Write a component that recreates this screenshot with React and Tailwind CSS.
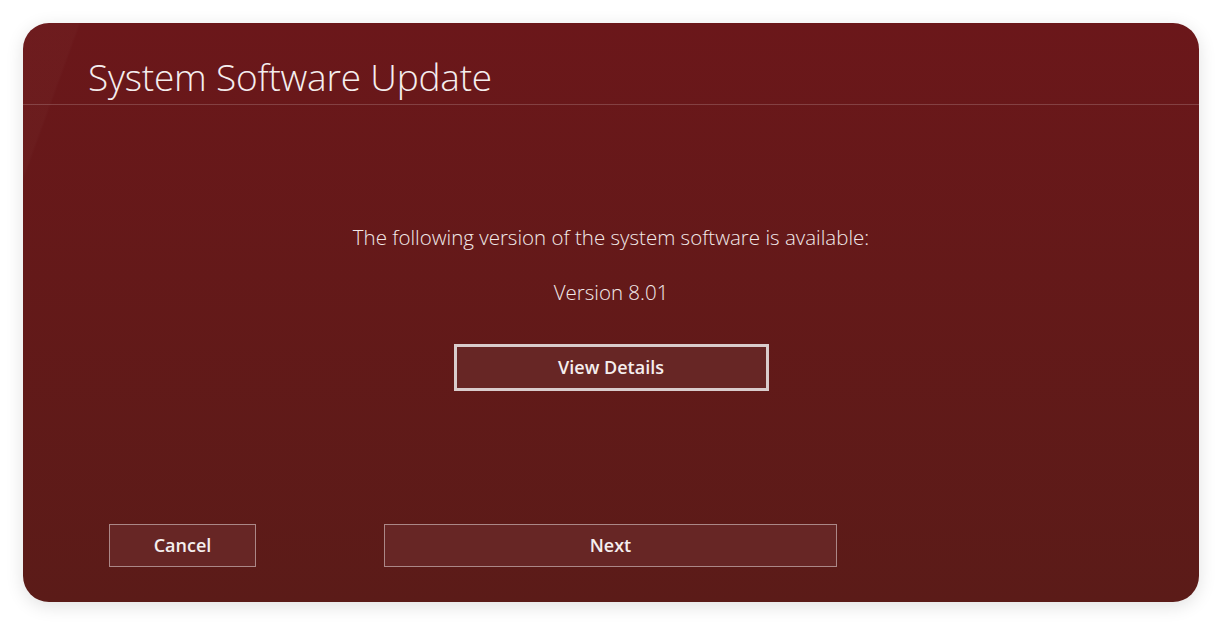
export default function App() {
  return (
    <div className="w-[1222px] h-[626px] bg-white flex items-start justify-start pt-[23px] pl-[23px]" style={{ fontFamily: '"Open Sans", "Noto Sans", sans-serif' }}>
      <div className="relative w-[1176px] h-[579px] rounded-[26px] overflow-hidden bg-gradient-to-b from-[#6b171a] to-[#5b1b18] shadow-[0_4px_18px_rgba(0,0,0,0.12)] flex flex-col">
        <div className="absolute inset-0 pointer-events-none bg-[linear-gradient(110deg,rgba(255,255,255,0.018)_0%,rgba(255,255,255,0.018)_4%,transparent_4.2%)]" />
        <div className="h-[82px] border-b border-[rgba(255,255,255,0.18)] pl-[65px] flex items-end pb-[4px]">
          <h1 className="text-[37px] font-light text-[#f5eeee] leading-none tracking-[-0.2px] pb-[5px]">System Software Update</h1>
        </div>
        <div className="flex flex-col items-center pt-[122px]">
          <p className="text-[20.5px] font-light text-[#f2e9e9] leading-none">The following version of the system software is available:</p>
          <p className="text-[20.5px] font-light text-[#f2e9e9] leading-none mt-[34px]">Version 8.01</p>
          <button className="mt-[42px] w-[315px] h-[47px] border-[3px] border-[#d9cccc] bg-[#672625] text-[#f5eeee] text-[18px] font-semibold flex items-center justify-center">View Details</button>
        </div>
        <div className="mt-auto mb-[35px] flex gap-[128px] pl-[86px]">
          <button className="w-[147px] h-[43px] border border-[rgba(255,255,255,0.45)] bg-[#672625] text-[#f5eeee] text-[18px] font-semibold flex items-center justify-center">Cancel</button>
          <button className="w-[453px] h-[43px] border border-[rgba(255,255,255,0.45)] bg-[#672625] text-[#f5eeee] text-[18px] font-semibold flex items-center justify-center">Next</button>
        </div>
      </div>
    </div>
  );
}
